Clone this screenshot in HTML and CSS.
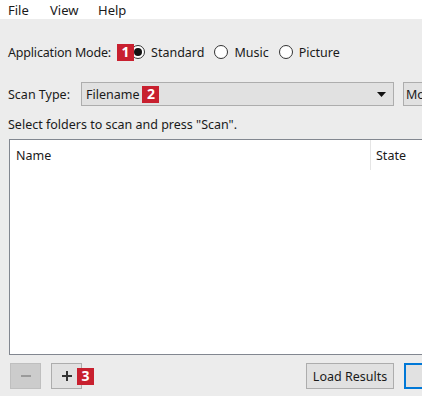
FILE: index.html
```html
<!DOCTYPE html>
<html>
<head>
<meta charset="utf-8">
<link rel="stylesheet" href="styles.css">
</head>
<body>
<div class="window">
  <div class="menubar">
    <span class="menu">File</span>
    <span class="menu">View</span>
    <span class="menu">Help</span>
  </div>
  <div class="content">
    <div class="mode-row">
      <span class="label mode-label">Application Mode:</span>
      <span class="badge b1">1</span>
      <label class="radio"><span class="circle checked"></span>Standard</label>
      <label class="radio"><span class="circle"></span>Music</label>
      <label class="radio"><span class="circle"></span>Picture</label>
    </div>
    <div class="scan-row">
      <span class="label scan-label">Scan Type:</span>
      <div class="combo">
        <span class="combo-text">Filename</span>
        <span class="badge b2">2</span>
        <svg class="arrow" width="9" height="5" viewBox="0 0 9 5"><path d="M0 0h9L4.5 5z" fill="#111"/></svg>
      </div>
      <div class="btn more">More Options</div>
    </div>
    <div class="hint">Select folders to scan and press "Scan".</div>
    <div class="table">
      <div class="thead">
        <div class="th name">Name</div>
        <div class="th state">State</div>
      </div>
    </div>
    <div class="bottom">
      <div class="btn small disabled"><svg width="10" height="2" viewBox="0 0 10 2"><rect width="10" height="2" fill="#9a9a9a"/></svg></div>
      <div class="btn small plus"><svg width="10" height="10" viewBox="0 0 10 10"><rect y="4" width="10" height="2" fill="#333"/><rect x="4" width="2" height="10" fill="#333"/></svg></div>
      <span class="badge b3">3</span>
      <div class="spacer"></div>
      <div class="btn load">Load Results</div>
      <div class="btn scan"></div>
    </div>
  </div>
</div>
</body>
</html>
```
FILE: styles.css
```css
* { box-sizing: border-box; }
html, body { margin: 0; padding: 0; }
body {
  width: 422px;
  height: 396px;
  overflow: hidden;
  background: #ececec;
  font-family: "Noto Sans", "Open Sans", sans-serif;
  font-size: 12.5px;
  color: #1a1a1a;
}
.window { width: 422px; height: 396px; overflow: hidden; }
.menubar {
  height: 19px;
  background: #ffffff;
  display: flex;
  align-items: center;
  padding-left: 8px;
  font-size: 13px;
}
.menu { flex-shrink: 0; }
.menu:nth-child(1) { width: 42px; }
.menu:nth-child(2) { width: 48px; }
.content { padding: 0 0 0 8px; width: 560px; }
.mode-row {
  display: flex;
  align-items: center;
  height: 30px;
  margin-top: 18px;
  white-space: nowrap;
}
.mode-label { letter-spacing: -0.18px; }
.mode-row > *, .scan-row > *, .bottom > * { flex-shrink: 0; }
.badge {
  display: inline-flex;
  align-items: center;
  justify-content: center;
  width: 17px;
  height: 17px;
  background: #c8202f;
  color: #fff;
  font-weight: 700;
  font-size: 14px;
  line-height: 1;
}
.b1 { margin-left: 6px; position: relative; z-index: 2; }
.radio { display: inline-flex; align-items: center; margin-right: 10px; }
.radio:first-of-type { margin-left: -3px; }
.circle {
  width: 14px;
  height: 14px;
  border: 1px solid #333;
  border-radius: 50%;
  background: #fff;
  margin-right: 6px;
  display: inline-flex;
  align-items: center;
  justify-content: center;
}
.circle.checked::after {
  content: "";
  width: 8px;
  height: 8px;
  border-radius: 50%;
  background: #111;
}
.scan-row {
  display: flex;
  align-items: center;
  margin-top: 15px;
  white-space: nowrap;
}
.scan-label { width: 73px; }
.combo {
  width: 313px;
  height: 24px;
  background: #e1e1e1;
  border: 1px solid #adadad;
  display: flex;
  align-items: center;
  padding-left: 4px;
  padding-right: 7px;
}
.combo-text { margin-right: 3px; }
.arrow { margin-left: auto; }
.btn {
  background: #e1e1e1;
  border: 1px solid #adadad;
  display: flex;
  align-items: center;
  justify-content: center;
  white-space: nowrap;
}
.more { margin-left: 9px; height: 24px; padding: 0 6px 0 2px; }
.hint { margin-top: 10px; height: 18px; line-height: 18px; }
.table {
  margin-top: 5px;
  margin-left: 1px;
  width: 440px;
  height: 216px;
  background: #fff;
  border: 1px solid #828790;
  border-right: none;
}
.thead { display: flex; height: 30px; align-items: stretch; }
.th { display: flex; align-items: center; }
.name { width: 361px; padding-left: 6px; border-right: 1px solid #e5e5e5; }
.state { padding-left: 5px; }
.bottom {
  display: flex;
  align-items: center;
  margin-top: 8px;
}
.small { width: 31px; height: 26px; }
.disabled { margin-left: 2px; background: #cccccc; border-color: #bfbfbf; }
.plus { margin-left: 10px; }
.b3 { margin-left: -5px; position: relative; z-index: 2; }
.spacer { width: 212px; }
.load { width: 88px; height: 26px; }
.scan { margin-left: 10px; width: 90px; height: 26px; border: 2px solid #0078d7; }
```
